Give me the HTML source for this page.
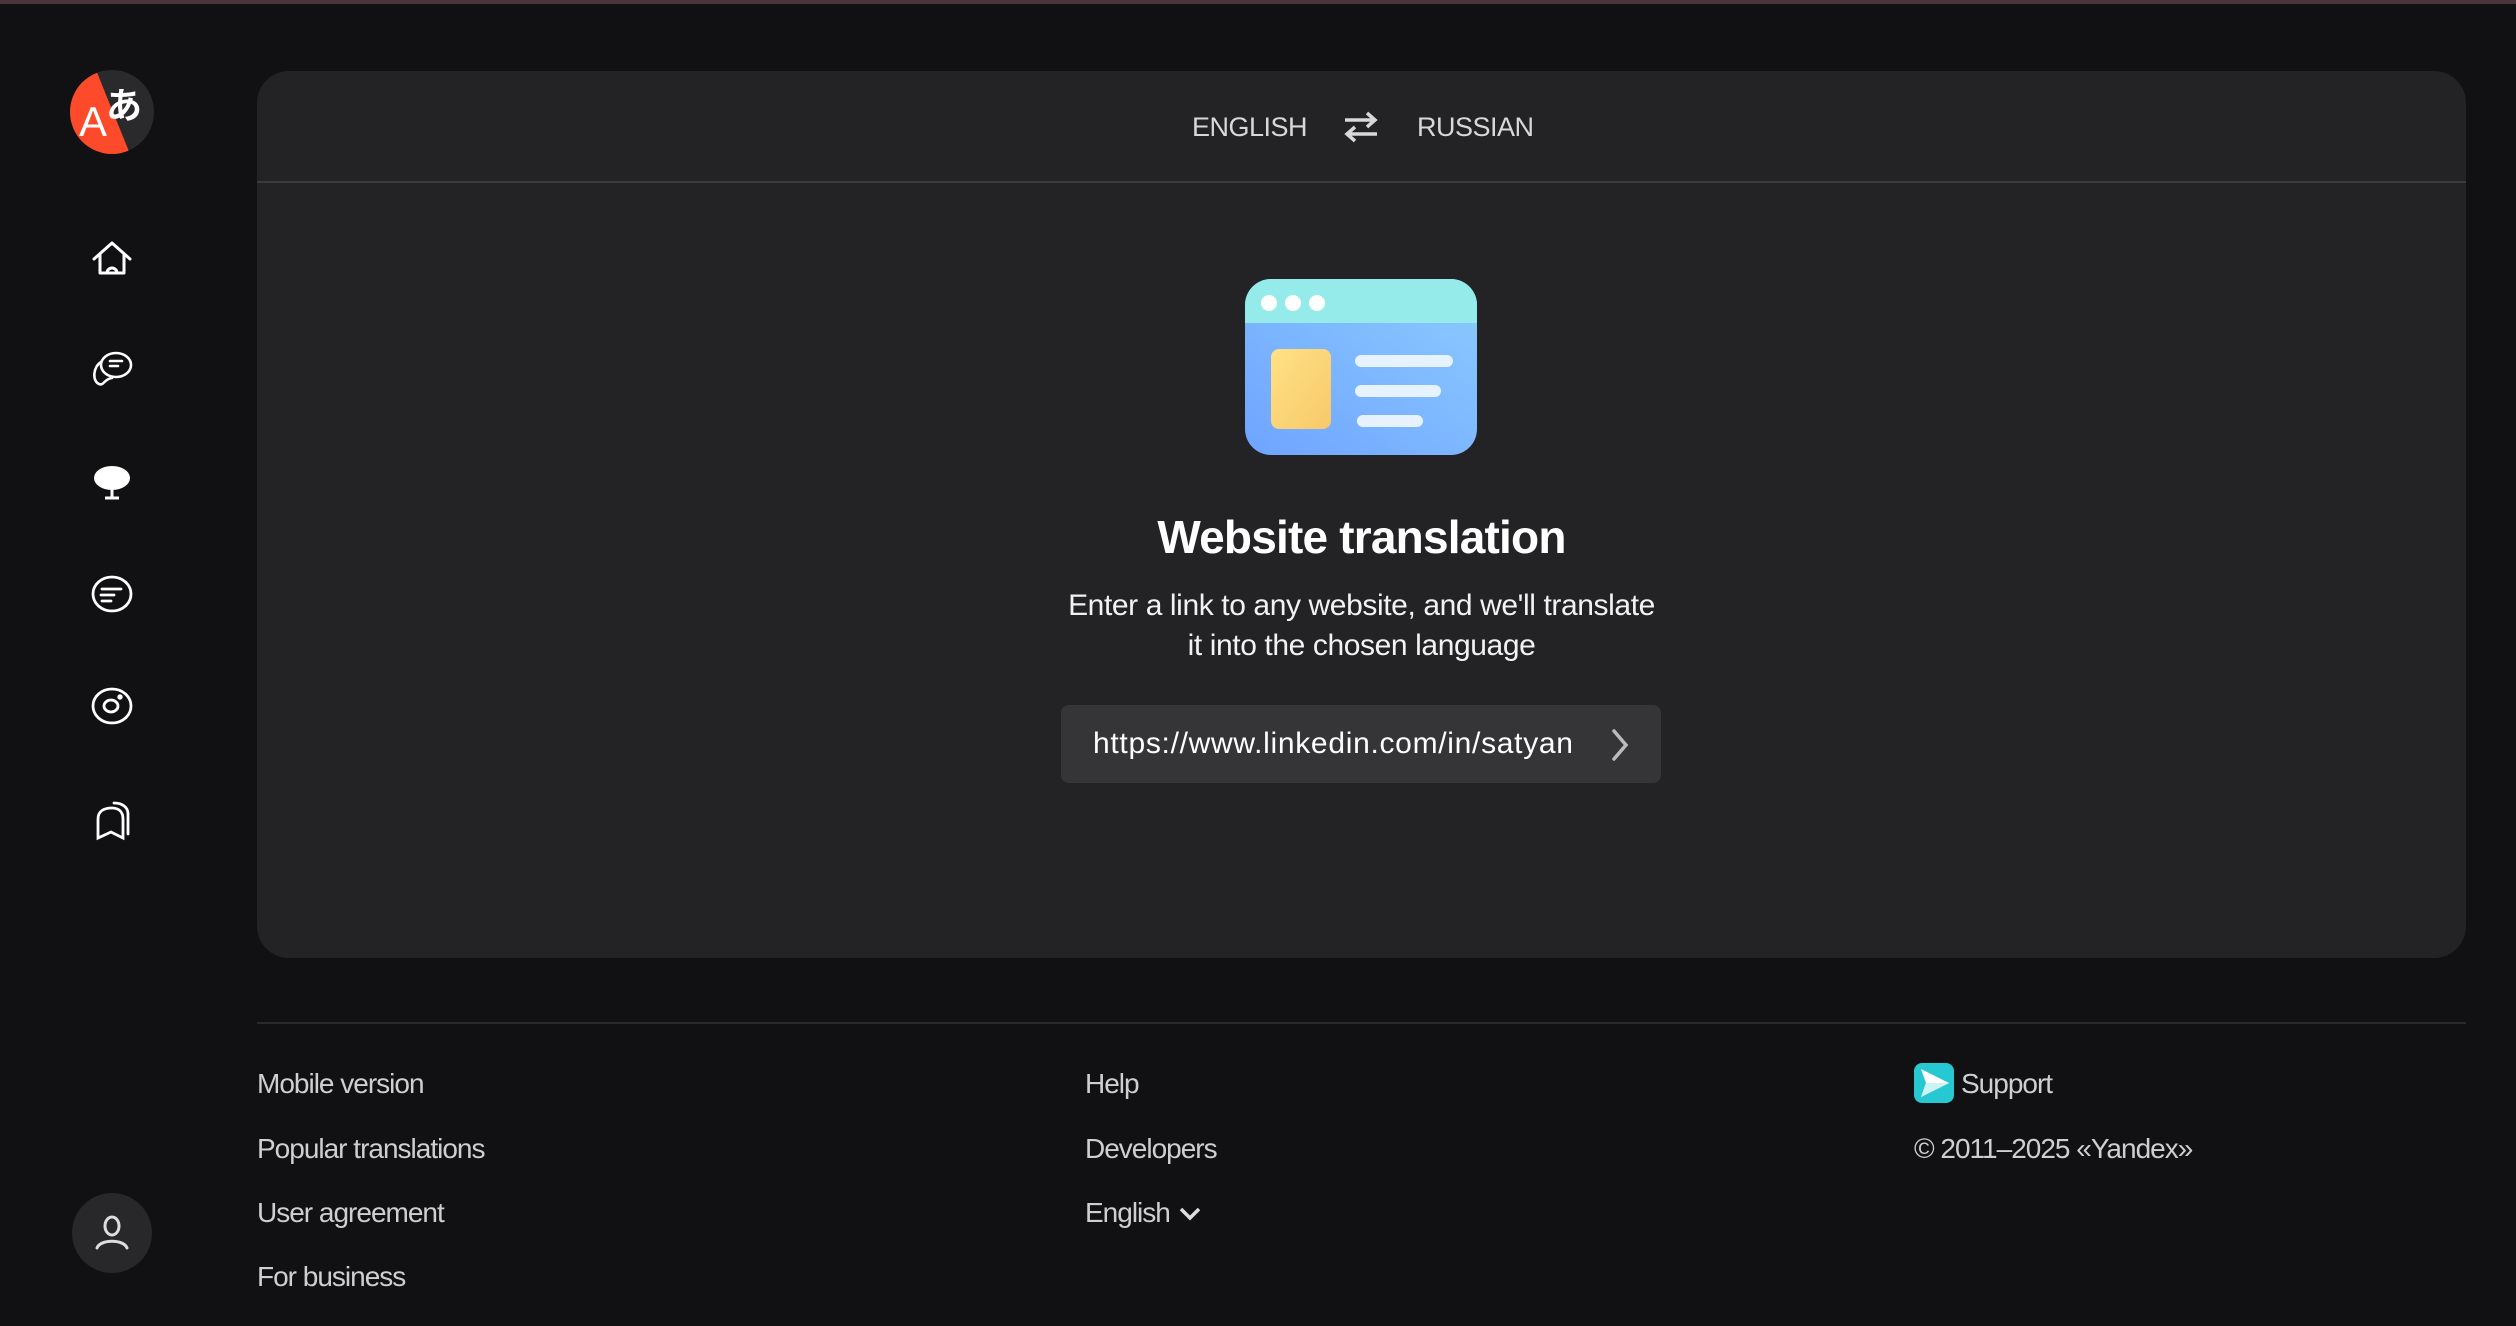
<!DOCTYPE html>
<html><head><meta charset="utf-8"><style>
*{margin:0;padding:0;box-sizing:border-box}
body{width:2516px;height:1326px;background:#111113;font-family:"Liberation Sans",sans-serif;position:relative;overflow:hidden;color:#fff}
.topbar{position:absolute;left:0;top:0;width:2516px;height:4px;background:#4a353b}
.abs{position:absolute}
.card{position:absolute;left:257px;top:71px;width:2209px;height:887px;background:#232325;border-radius:32px}
.hdr{position:absolute;left:0;top:0;width:100%;height:112px;border-bottom:2px solid #3b3b3e}
.lang{position:absolute;top:110px;font-size:27px;color:#d8d8d8;letter-spacing:-0.5px;line-height:34px}
.foot{position:absolute;font-size:28px;color:#cfcfcf;letter-spacing:-1px;line-height:34px;white-space:nowrap}
.ic{position:absolute;left:90px;width:44px;height:44px}
</style></head><body>
<div class="topbar"></div>

<svg class="abs" style="left:70px;top:70px" width="84" height="84" viewBox="0 0 84 84">
<defs><clipPath id="c"><circle cx="42" cy="42" r="42"/></clipPath></defs>
<g clip-path="url(#c)">
<rect width="84" height="84" fill="#2a2a2c"/>
<polygon points="0,0 26,0 60,84 0,84" fill="#fc4a2a"/>
</g>
<text x="9" y="66" font-family="Liberation Sans" font-size="42" fill="#fff">A</text>
<text x="36" y="48" font-family="Noto Sans CJK JP,sans-serif" font-size="36" font-weight="bold" fill="#fff">あ</text>
</svg>

<svg class="ic" style="top:236px" viewBox="0 0 44 44" fill="none" stroke="#fff" stroke-width="3" stroke-linecap="round" stroke-linejoin="round"><path d="M4 23 L22 7 L40 23 M10 19 V37 H34 V19 M17 37 a5 5 0 0 1 10 0"/></svg>
<svg class="ic" style="top:348px" viewBox="0 0 44 44" fill="none" stroke="#fff" stroke-width="2.6" stroke-linecap="round"><ellipse cx="26" cy="17" rx="15" ry="12"/><path d="M20 13h12 M20 18h8 M11 14 C3 19 2 33 9 36 C14 38 14 31 22 30"/></svg>
<svg class="ic" style="top:460px" viewBox="0 0 44 44"><ellipse cx="22" cy="18" rx="18" ry="12" fill="#fff"/><path d="M22 28v10 M15 38h14" stroke="#fff" stroke-width="3"/></svg>
<svg class="ic" style="top:572px" viewBox="0 0 44 44" fill="none" stroke="#fff" stroke-width="2.8" stroke-linecap="round"><ellipse cx="22" cy="22" rx="19" ry="17"/><path d="M12 17h19 M11 23h13 M12 29h9"/></svg>
<svg class="ic" style="top:684px" viewBox="0 0 44 44" fill="none" stroke="#fff" stroke-width="2.8"><ellipse cx="22" cy="22" rx="19" ry="17"/><ellipse cx="21" cy="22" rx="7" ry="6"/><circle cx="30" cy="13" r="1.3" fill="#fff"/></svg>
<svg class="ic" style="top:799px" viewBox="0 0 44 44" fill="none" stroke="#fff" stroke-width="2.8" stroke-linecap="round"><path d="M8 39 V20 C8 12 14 9 22 9 C29 9 33 13 33 20 V39 L21 33 Z"/><path d="M24 4 C32 4 38 8 38 15 V35"/></svg>

<div class="abs" style="left:72px;top:1193px;width:80px;height:80px;border-radius:50%;background:#28282a"></div>
<svg class="abs" style="left:92px;top:1213px" width="40" height="40" viewBox="0 0 40 40" fill="none" stroke="#ddd" stroke-width="3" stroke-linecap="round"><ellipse cx="20" cy="13" rx="7" ry="9"/><path d="M5 35 C8 26 32 26 35 35"/></svg>

<div class="card">
 <div class="hdr"></div>
</div>
<div class="lang" style="left:1192px">ENGLISH</div>
<svg class="abs" style="left:1343px;top:111px" width="36" height="32" viewBox="0 0 36 32" fill="none" stroke="#d8d8d8" stroke-width="3.5"><path d="M2 9h30 M24 2l8 7-8 7"/><path d="M34 23H4 M12 16l-8 7 8 7"/></svg>
<div class="lang" style="left:1417px">RUSSIAN</div>

<svg class="abs" style="left:1245px;top:279px" width="232" height="176" viewBox="0 0 232 176">
<defs><linearGradient id="b" x1="0" y1="1" x2="1" y2="0"><stop offset="0" stop-color="#6fa4ff"/><stop offset="1" stop-color="#8ccbff"/></linearGradient>
<linearGradient id="y" x1="0" y1="0" x2="1" y2="1"><stop offset="0" stop-color="#ffe185"/><stop offset="1" stop-color="#f7c96a"/></linearGradient></defs>
<rect width="232" height="176" rx="26" fill="url(#b)"/>
<path d="M26 0H206A26 26 0 0 1 232 26V44H0V26A26 26 0 0 1 26 0Z" fill="#95ebea"/>
<circle cx="24" cy="24" r="8" fill="#fff"/><circle cx="48" cy="24" r="8" fill="#fff"/><circle cx="72" cy="24" r="8" fill="#fff"/>
<rect x="26" y="70" width="60" height="80" rx="8" fill="url(#y)"/>
<rect x="110" y="76" width="98" height="12" rx="6" fill="#e6f3ff"/>
<rect x="110" y="106" width="86" height="12" rx="6" fill="#e6f3ff"/>
<rect x="112" y="136" width="66" height="12" rx="6" fill="#e6f3ff"/>
</svg>

<div class="abs" style="left:0;width:2723px;top:507px;text-align:center;font-size:46px;font-weight:bold;letter-spacing:-0.8px;line-height:60px">Website translation</div>
<div class="abs" style="left:0;width:2723px;top:586px;text-align:center;font-size:30px;letter-spacing:-0.4px;line-height:40px;color:#f2f2f2">Enter a link to any website, and we'll translate<br>it into the chosen language</div>

<div class="abs" style="left:1061px;top:705px;width:600px;height:78px;background:#353538;border-radius:8px"></div>
<div class="abs" style="left:1093px;top:724px;font-size:30px;line-height:40px;color:#fff;white-space:nowrap;letter-spacing:0.7px">https://www.linkedin.com/in/satyan</div>
<svg class="abs" style="left:1610px;top:728px" width="20" height="34" viewBox="0 0 20 34" fill="none" stroke="#bbb" stroke-width="3.5" stroke-linecap="round"><path d="M4 3l12 14-12 14"/></svg>

<div class="abs" style="left:257px;top:1022px;width:2209px;height:2px;background:#2a2a2d"></div>

<div class="foot" style="left:257px;top:1067px">Mobile version</div>
<div class="foot" style="left:257px;top:1132px">Popular translations</div>
<div class="foot" style="left:257px;top:1196px">User agreement</div>
<div class="foot" style="left:257px;top:1260px">For business</div>

<div class="foot" style="left:1085px;top:1067px">Help</div>
<div class="foot" style="left:1085px;top:1132px">Developers</div>
<div class="foot" style="left:1085px;top:1196px">English</div>
<svg class="abs" style="left:1178px;top:1204px" width="24" height="20" viewBox="0 0 24 20" fill="none" stroke="#ddd" stroke-width="3.5"><path d="M3 5l9 9 9-9"/></svg>

<svg class="abs" style="left:1914px;top:1063px" width="40" height="40" viewBox="0 0 40 40"><rect width="40" height="40" rx="8" fill="#26c8d2"/><path d="M7 6 L35 20 L7 34 L12 20Z" fill="#fff"/><path d="M12 20 L35 20 L7 34Z" fill="#cdf3f5"/></svg>
<div class="foot" style="left:1961px;top:1067px">Support</div>
<div class="foot" style="left:1914px;top:1132px">© 2011–2025 «Yandex»</div>
</body></html>
